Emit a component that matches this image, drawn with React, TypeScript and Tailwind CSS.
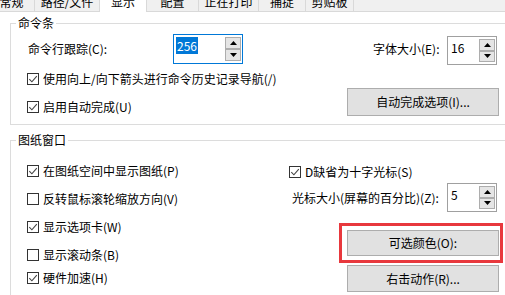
import type { ReactNode } from 'react';

const tabs = [
    { name: '常规', cls: 'w-[46px] -ml-[11px] border-r border-b' },
    { name: '路径/文件', cls: 'w-[65px] border-r border-b' },
    { name: '显示', cls: 'w-[47px] border-r bg-white' },
    { name: '配置', cls: 'w-[52px] border-r border-b' },
    { name: '正在打印', cls: 'w-[60px] border-r border-b' },
    { name: '捕捉', cls: 'w-[47px] border-r border-b' },
    { name: '剪贴板', cls: 'w-[48px] border-r border-b' },
];

function CheckBox({ checked }: { checked: boolean }) {
    return (
        <span className="w-[12px] h-[12px] border border-[#333333] bg-white flex items-center justify-center shrink-0">
            {checked && (
                <svg width="10" height="10" viewBox="0 0 10 10">
                    <path d="M1.3 5.2 L3.9 7.8 L8.8 2.2" stroke="#444444" strokeWidth="1.1" fill="none" />
                </svg>
            )}
        </span>
    );
}

function CheckRow({ checked, label, className = '' }: { checked: boolean; label: string; className?: string }) {
    return (
        <div className={`flex items-center gap-[4px] h-[16px] ${className}`}>
            <CheckBox checked={checked} />
            <span>{label}</span>
        </div>
    );
}

function SpinArrow({ up }: { up?: boolean }) {
    return (
        <div className="flex-1 flex items-center justify-center bg-[#e5e5e5] border border-[#adadad]">
            <svg width="7" height="4" viewBox="0 0 7 4">
                <path d={up ? 'M0 4 L3.5 0 L7 4 Z' : 'M0 0 L3.5 4 L7 0 Z'} fill="#000" />
            </svg>
        </div>
    );
}

function SpinBox({ value, focused, className = '' }: { value: string; focused?: boolean; className?: string }) {
    return (
        <div className={`flex bg-white border ${focused ? 'border-[#0078d7]' : 'border-[#a0a0a0]'} ${className}`}>
            <div className="flex-1 pl-[2px] pt-[3px] leading-[15px]">
                {focused ? <span className="bg-[#0078d7] text-white px-[1px]">{value}</span> : <span className="pl-[1px]">{value}</span>}
            </div>
            <div className="w-[17px] flex flex-col py-[2px] pr-[1px]">
                <SpinArrow up />
                <SpinArrow />
            </div>
        </div>
    );
}

function Button({ children, className = '' }: { children: ReactNode; className?: string }) {
    return (
        <div className={`flex items-center justify-center bg-[#e1e1e1] border border-[#adadad] w-[152px] ${className}`}>
            {children}
        </div>
    );
}

export default function App() {
    return (
        <div className="w-[505px] h-[295px] overflow-hidden bg-white text-[12px] leading-[16px] text-black font-['Microsoft_YaHei','Noto_Sans_CJK_SC',sans-serif]">
            {/* Tabs */}
            <div className="flex h-[20px] -mt-[8px] bg-[#f0f0f0]">
                {tabs.map((t) => (
                    <div key={t.name} className={`flex items-center justify-center shrink-0 border-[#d9d9d9] ${t.cls}`}>
                        {t.name}
                    </div>
                ))}
                <div className="flex-1 border-b border-[#d9d9d9]" />
            </div>

            {/* 命令条 */}
            <fieldset className="ml-[10px] mt-[3px] w-[520px] border border-[#dcdcdc] pb-[8px]">
                <legend className="ml-[5px] px-[2px] leading-[16px]">命令条</legend>
                <div className="flex items-center h-[30px] mt-[3px]">
                    <span className="w-[162px] pl-[17px]">命令行跟踪(C):</span>
                    <SpinBox value="256" focused className="w-[70px] h-[30px]" />
                    <span className="ml-[130px] w-[74px]">字体大小(E):</span>
                    <SpinBox value="16" className="w-[50px] h-[29px] self-start mt-[2px]" />
                </div>
                <CheckRow checked label="使用向上/向下箭头进行命令历史记录导航(/)" className="pl-[16px] mt-[7px]" />
                <div className="flex">
                    <div className="w-[336px] pl-[16px] pt-[12px]">
                        <CheckRow checked label="启用自动完成(U)" />
                    </div>
                    <Button className="h-[28px] mt-[1px]">自动完成选项(I)...</Button>
                </div>
            </fieldset>

            {/* 图纸窗口 */}
            <fieldset className="ml-[10px] mt-[7px] w-[520px] border border-[#dcdcdc] pb-[10px]">
                <legend className="ml-[5px] px-[2px] leading-[16px]">图纸窗口</legend>
                <div className="flex">
                    <div className="w-[278px] pl-[16px]">
                        <CheckRow checked label="在图纸空间中显示图纸(P)" className="mt-[15px]" />
                        <CheckRow checked={false} label="反转鼠标滚轮缩放方向(V)" className="mt-[12px]" />
                        <CheckRow checked label="显示选项卡(W)" className="mt-[12px]" />
                        <CheckRow checked={false} label="显示滚动条(B)" className="mt-[12px]" />
                        <CheckRow checked label="硬件加速(H)" className="mt-[7px]" />
                    </div>
                    <div className="flex flex-col">
                        <CheckRow checked label="D缺省为十字光标(S)" className="mt-[16px]" />
                        <div className="flex items-center h-[29px] mt-[3px]">
                            <span className="w-[158px] pl-[3px]">光标大小(屏幕的百分比)(Z):</span>
                            <SpinBox value="5" className="w-[50px] h-[29px]" />
                        </div>
                        <div className="relative ml-[58px] mt-[18px] w-[152px]">
                            <Button className="h-[26px]">可选颜色(O):</Button>
                            <div className="absolute -left-[8px] -top-[7px] -right-[4px] -bottom-[7px] border-[3px] border-[#e8383d]" />
                        </div>
                        <Button className="h-[27px] ml-[58px] mt-[9px]">右击动作(R)...</Button>
                    </div>
                </div>
            </fieldset>
        </div>
    );
}
